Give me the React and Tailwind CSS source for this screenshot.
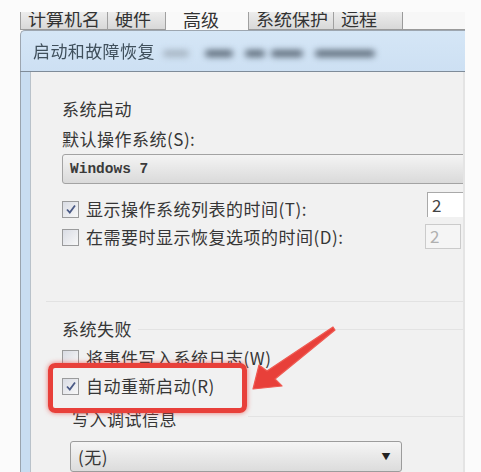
const FONT = { fontFamily: '"Noto Sans CJK SC", "Noto Sans", sans-serif' };

const tabs = [
  { label: '计算机名', w: 87 },
  { label: '硬件', w: 58 },
  { label: '高级', w: 83, active: true },
  { label: '系统保护', w: 85 },
  { label: '远程', w: 69 },
];

const Check = ({ checked }) => (
  <span className="flex h-[17px] w-[17px] shrink-0 items-center justify-center border border-[#9a9b9c] bg-gradient-to-br from-[#d9dce4] to-[#f8f8f8]">
    {checked && (
      <svg width="12" height="12" viewBox="0 0 12 12">
        <path d="M2 6.5 L4.8 9.5 L10 2.5" fill="none" stroke="#4a5a86" strokeWidth="1.8" />
      </svg>
    )}
  </span>
);

const Blob = ({ w, ml, dark }) => (
  <div className={`h-[7px] rounded-full blur-[3px] ${dark ? 'bg-[#5d6b7a]' : 'bg-[#a6b4c2]'}`} style={{ width: w, marginLeft: ml }} />
);

export default function App() {
  return (
    <div className="relative h-[472px] w-[481px] overflow-hidden bg-[#fbfbfb] text-[#363636]" style={FONT}>
      <div className="h-[12px]" />

      {/* tab strip, cut at the top */}
      <div className="flex h-[18px] pl-[20px]">
        {tabs.map((t) => (
          <div
            key={t.label}
            className={`flex h-[18px] items-end overflow-hidden border-l border-[#a0a0a0] pl-[7px] ${
              t.active ? 'bg-[#f9f9f9]' : 'border-b border-b-[#9a9a9a] bg-gradient-to-b from-[#ededed] to-[#d8d8d8]'
            }`}
            style={{ width: t.w }}
          >
            <span className={`mb-[2px] whitespace-nowrap text-[18px] leading-[18px] text-[#333] ${t.active ? 'pl-[10px]' : ''}`}>
              {t.label}
            </span>
          </div>
        ))}
        <div className="h-[18px] w-[63px] border-b border-l border-[#9a9a9a] bg-[#f7f7f7]" />
      </div>

      {/* dialog */}
      <div className="ml-[20px] flex h-[442px] w-[445px] flex-col">
        <div className="flex h-[42px] items-center rounded-tl-[5px] border-l border-t border-[#9da6b0] bg-gradient-to-b from-[#d5e6f6] to-[#cde0f3] pl-[12px]">
          <span className="text-[17px] tracking-[0.4px] text-[#40505c] blur-[0.4px]">启动和故障恢复</span>
          <div className="flex items-center pt-[4px]">
            <Blob w={26} ml={8} />
            <Blob w={28} ml={16} dark />
            <Blob w={20} ml={12} dark />
            <Blob w={32} ml={6} dark />
            <Blob w={60} ml={12} dark />
          </div>
        </div>
        <div className="h-[1px] bg-[#7f8c99]" />

        <div className="flex flex-1">
          <div className="w-[10px] border-l border-[#9aa4ae] bg-[#c8ddf1]" />
          <div className="flex flex-1 flex-col overflow-hidden border-l border-r-2 border-l-[#b9c2ca] border-r-[#e4e4e4] bg-[#f1f1f1] pl-[31px] text-[17px] leading-[20px] tracking-[0.5px]">
            <div className="mt-[27px] h-[20px]">系统启动</div>
            <div className="mt-[10px] h-[20px]">默认操作系统(S):</div>
            <div
              className="mt-[5px] -mr-[6px] flex h-[30px] items-center rounded-[3px] border border-[#a3a3a3] bg-gradient-to-b from-[#f4f4f4] to-[#dadada] pl-[7px] text-[14.5px] font-bold tracking-normal text-[#3a3a3a]"
              style={{ fontFamily: '"Liberation Mono", monospace' }}
            >
              Windows 7
            </div>

            <div className="mt-[12px] flex h-[26px] items-center">
              <Check checked />
              <span className="ml-[7px]">显示操作系统列表的时间(T):</span>
              <div className="-mr-[4px] ml-auto flex h-[25px] w-[40px] -translate-y-[5px] items-center border-l border-t border-[#a9a9a9] bg-white pl-[4px] text-[#444]">
                2
              </div>
            </div>
            <div className="mt-[2px] flex h-[26px] items-center">
              <Check />
              <span className="ml-[7px]">在需要时显示恢复选项的时间(D):</span>
              <div className="ml-auto mr-[2px] flex h-[25px] w-[36px] -translate-y-[1px] items-center border border-[#cbcbcb] bg-[#f5f5f5] pl-[4px] text-[#b0b0b0]">
                2
              </div>
            </div>

            <div className="-ml-[16px] mt-[51px] h-[1px] bg-[#e2e2e2]" />

            <div className="mt-[17px] flex h-[20px] items-center">
              <span>系统失败</span>
              <div className="ml-[6px] h-[1px] flex-1 bg-[#e3e3e3]" />
            </div>
            <div className="mt-[9px] flex h-[20px] items-center">
              <Check />
              <span className="ml-[7px]">将事件写入系统日志(W)</span>
            </div>
            <div className="mt-[8px] flex h-[20px] items-center">
              <Check checked />
              <span className="ml-[7px]">自动重新启动(R)</span>
            </div>
            <div className="mt-[13px] flex h-[20px] items-center pl-[10px]">
              <span>写入调试信息</span>
              <div className="ml-[71px] h-[1px] flex-1 translate-y-[-3px] bg-[#e3e3e3]" />
            </div>
            <div className="ml-[8px] mt-[12px] flex h-[31px] w-[332px] items-center justify-between rounded-[3px] border border-[#9c9c9c] bg-gradient-to-b from-[#f5f5f5] to-[#dcdcdc] pl-[7px] pr-[10px]">
              <span>(无)</span>
              <span className="text-[9px] text-[#222]">▼</span>
            </div>
          </div>
        </div>
      </div>

      {/* annotation: red box and arrow */}
      <div className="absolute left-[48px] top-[363px] h-[50px] w-[199px] rounded-[7px] border-[5px] border-[#e8403a] shadow-[0_0_5px_rgba(232,64,58,0.7)]" />
      <svg className="absolute left-0 top-0" width="481" height="472" viewBox="0 0 481 472">
        <polygon
          points="253,389 259,365 267,371 333,327 335,330 275,379 282,386"
          fill="#e8403a"
          stroke="#ef5a52"
          strokeWidth="1.2"
          strokeLinejoin="round"
        />
      </svg>
    </div>
  );
}
